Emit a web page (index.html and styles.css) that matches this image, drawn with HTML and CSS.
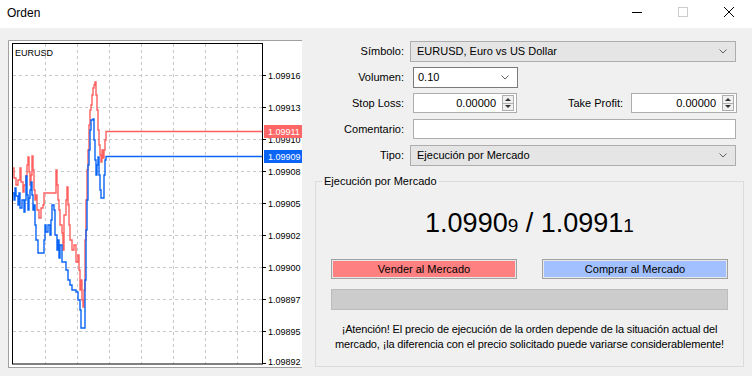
FILE: index.html
```html
<!DOCTYPE html>
<html lang="es">
<head>
    <meta charset="UTF-8">
    <title>Orden</title>
    <link rel="stylesheet" href="styles.css">
</head>
<body>
<div class="window">
    <header class="titlebar">
        <span class="title">Orden</span>
        <div class="caption-buttons">
            <span class="cap-btn">
                <svg width="12" height="12" viewBox="0 0 12 12"><path d="M1 6.5h10" stroke="#000" stroke-width="1"/></svg>
            </span>
            <span class="cap-btn">
                <svg width="12" height="12" viewBox="0 0 12 12"><rect x="1.5" y="1.5" width="9" height="9" fill="none" stroke="#cccccc"/></svg>
            </span>
            <span class="cap-btn">
                <svg width="12" height="12" viewBox="0 0 12 12"><path d="M1 1l10 10M11 1L1 11" stroke="#000" stroke-width="1"/></svg>
            </span>
        </div>
    </header>

    <main class="content">
        <section class="chart">
            <svg width="294" height="328" viewBox="8 40 294 328">
                <rect x="9" y="41" width="293" height="326" fill="#fff"/>
                <path d="M8.5 368V40.5H302M8.5 367.5H302" fill="none" stroke="#a0a0a0"/>

                <g class="grid" stroke="#c8c8c8" stroke-dasharray="3 3">
                    <path d="M45.5 44V364M77.5 44V364M109.5 44V364M141.5 44V364M173.5 44V364M205.5 44V364M237.5 44V364"/>
                    <path d="M13 75.5H262M13 107.5H262M13 139.5H262M13 171.5H262M13 203.5H262M13 235.5H262M13 267.5H262M13 299.5H262M13 331.5H262"/>
                </g>

                <polyline fill="none" stroke="#ff5f5f" stroke-width="1.4" points="13,168 14,168 14,178 16,178 16,185 18,185 18,180 20,180 20,168 21,168 21,182 23,182 23,192 24,192 24,185 26,185 26,176 27,176 27,165 28,165 28,157 29,157 29,172 30,172 30,185 31,185 31,175 32,175 32,156 33,156 33,170 34,170 34,190 35,190 35,200 36,200 36,195 37,195 37,210 39,210 39,218 41,218 41,208 43,208 43,205 44,205 44,193 55,193 56,193 56,170 57,170 57,185 58,185 58,200 59,200 59,210 60,210 60,225 62,225 62,233 63,233 63,250 64,250 64,215 66,215 66,200 67,200 67,187 68,187 68,205 69,205 69,225 70,225 70,240 72,240 72,250 74,250 74,245 76,245 76,262 78,262 78,255 79,255 79,270 80,270 80,290 81,290 81,280 82,280 82,300 83,300 83,307 84,307 84,290 85,290 85,240 86,240 86,200 87,200 87,170 88,170 88,150 89,150 89,125 90,125 90,110 91,110 91,105 92,105 92,95 93,95 93,88 94,88 94,85 95,85 95,82 96,82 96,95 97,95 97,110 98,110 98,130 99,130 99,145 100,145 100,155 101,155 101,162 102,162 102,150 103,150 103,158 104,158 104,150 105,150 105,140 106,140 106,131.5 262,131.5"/>
                <polyline fill="none" stroke="#0a64f5" stroke-width="1.4" points="13,193 14,193 14,200 15,200 15,188 16,188 16,196 18,196 18,205 19,205 19,193 20,193 20,208 22,208 22,200 24,200 24,212 25,212 25,200 26,200 26,176 27,176 27,195 28,195 28,210 29,210 29,198 30,198 30,190 31,190 31,182 32,182 32,195 33,195 33,210 34,210 34,205 35,205 35,225 36,225 36,240 38,240 38,253 43,253 44,253 44,240 45,240 45,225 46,225 46,232 48,232 48,225 50,225 50,235 51,235 51,220 52,220 52,205 54,205 54,210 55,210 55,235 57,235 57,250 58,250 58,240 59,240 59,258 60,258 60,245 62,245 62,262 64,262 66,262 66,270 68,270 68,280 70,280 70,285 72,285 72,290 76,290 76,292 78,292 78,300 80,300 80,310 81,310 81,328 84,328 85,328 85,280 86,280 86,230 87,230 87,200 88,200 88,165 89,165 89,150 90,150 90,130 91,130 91,120 93,120 93,119 94,119 94,140 95,140 95,160 96,160 96,175 97,175 97,165 98,165 98,157 99,157 99,175 100,175 100,190 101,190 101,198 103,198 104,198 104,175 105,175 105,160 106,160 106,156.5 262,156.5"/>

                <rect x="12.5" y="43.5" width="250" height="320.5" fill="none" stroke="#000"/>
                <path d="M263 75.5h3M263 107.5h3M263 139.5h3M263 171.5h3M263 203.5h3M263 235.5h3M263 267.5h3M263 299.5h3M263 331.5h3M263 363.5h3" stroke="#000"/>

                <text class="sym" x="15" y="56">EURUSD</text>
                <g class="axis">
                    <text x="268" y="79">1.09916</text>
                    <text x="268" y="111">1.09913</text>
                    <text x="268" y="143">1.09910</text>
                    <text x="268" y="175">1.09908</text>
                    <text x="268" y="207">1.09905</text>
                    <text x="268" y="239">1.09902</text>
                    <text x="268" y="271">1.09900</text>
                    <text x="268" y="303">1.09897</text>
                    <text x="268" y="335">1.09895</text>
                    <text x="268" y="365">1.09892</text>
                </g>
                <rect x="264" y="125" width="38" height="13" fill="#ff6666"/>
                <text class="tag" x="268" y="135">1.09911</text>
                <rect x="264" y="150" width="38" height="13" fill="#0a64f5"/>
                <text class="tag" x="268" y="160">1.09909</text>
            </svg>
        </section>

        <section class="order">
            <div class="form">
                <div class="row">
                    <label class="lbl">Símbolo:</label>
                    <div class="combo combo-list wide">
                        <span>EURUSD, Euro vs US Dollar</span>
                        <svg class="chev" width="8" height="5" viewBox="0 0 8 5"><path d="M0.5 0.5l3.5 3.5 3.5-3.5" fill="none" stroke="#606060"/></svg>
                    </div>
                </div>
                <div class="row">
                    <label class="lbl">Volumen:</label>
                    <div class="combo combo-edit volume">
                        <span>0.10</span>
                        <svg class="chev" width="8" height="5" viewBox="0 0 8 5"><path d="M0.5 0.5l3.5 3.5 3.5-3.5" fill="none" stroke="#606060"/></svg>
                    </div>
                </div>
                <div class="row">
                    <label class="lbl">Stop Loss:</label>
                    <div class="spin sl">
                        <span class="val">0.00000</span>
                        <span class="spin-btns"><i class="up"></i><i class="down"></i></span>
                    </div>
                    <label class="lbl tp-lbl">Take Profit:</label>
                    <div class="spin tp">
                        <span class="val">0.00000</span>
                        <span class="spin-btns"><i class="up"></i><i class="down"></i></span>
                    </div>
                </div>
                <div class="row">
                    <label class="lbl">Comentario:</label>
                    <div class="edit comment"></div>
                </div>
                <div class="row">
                    <label class="lbl">Tipo:</label>
                    <div class="combo combo-list wide">
                        <span>Ejecución por Mercado</span>
                        <svg class="chev" width="8" height="5" viewBox="0 0 8 5"><path d="M0.5 0.5l3.5 3.5 3.5-3.5" fill="none" stroke="#606060"/></svg>
                    </div>
                </div>
            </div>

            <fieldset class="exec">
                <legend>Ejecución por Mercado</legend>
                <div class="price">1.0990<small>9</small> / 1.0991<small>1</small></div>
                <div class="actions">
                    <button class="btn sell">Vender al Mercado</button>
                    <button class="btn buy">Comprar al Mercado</button>
                </div>
                <div class="progress"></div>
                <p class="warning">¡Atención! El precio de ejecución de la orden depende de la situación actual del<br>mercado, ¡la diferencia con el precio solicitado puede variarse considerablemente!</p>
            </fieldset>
        </section>
    </main>
</div>
</body>
</html>
```

FILE: styles.css
```css
body {
    margin: 0;
    font-family: "Liberation Sans", Arial, sans-serif;
    font-size: 11px;
    color: #000;
    background: #f0f0f0;
}

.window {
    width: 752px;
    height: 376px;
    overflow: hidden;
    background: #f0f0f0;
}

.titlebar {
    height: 28px;
    background: #fff;
    display: flex;
    justify-content: space-between;
    align-items: center;
}

.title {
    padding-left: 7px;
    font-size: 12px;
    margin-top: -2px;
}

.caption-buttons {
    display: flex;
    height: 28px;
}

.cap-btn {
    width: 46px;
    display: flex;
    align-items: center;
    justify-content: center;
    margin-top: -4px;
}

.content {
    display: flex;
    height: 348px;
    padding: 10px 8px 0 8px;
    box-sizing: border-box;
}

.chart {
    width: 294px;
    height: 328px;
    margin-top: 2px;
    flex: none;
}

.chart svg {
    display: block;
}

.chart text {
    font-family: "Liberation Sans", Arial, sans-serif;
    font-size: 9px;
    fill: #000;
}

.chart .tag {
    fill: #fff;
}

.order {
    flex: 1;
    margin-left: 13px;
    display: flex;
    flex-direction: column;
    padding-bottom: 9px;
}

.row {
    display: flex;
    align-items: center;
    height: 26px;
}

.lbl {
    width: 89px;
    margin-right: 6px;
    text-align: right;
    flex: none;
}

.combo {
    box-sizing: border-box;
    height: 21px;
    display: flex;
    align-items: center;
    justify-content: space-between;
    padding: 0 8px 0 6px;
}

.combo-list {
    background: #e5e5e5;
    border: 1px solid #adadad;
}

.wide {
    width: 326px;
}

.combo-edit {
    background: #fff;
    border: 1px solid #7a7a7a;
    margin-left: 3px;
    padding-left: 4px;
}

.volume {
    width: 105px;
}

.spin,
.edit {
    box-sizing: border-box;
    height: 20px;
    background: #fff;
    border: 1px solid #adadad;
    margin-left: 3px;
}

.spin {
    display: flex;
    align-items: center;
    justify-content: flex-end;
    padding-right: 2px;
}

.spin .val {
    margin-right: 6px;
}

.sl {
    width: 104px;
}

.tp-lbl {
    flex: 1;
    width: auto;
    margin-right: 5px;
}

.tp {
    width: 106px;
    margin-right: 7px;
}

.spin-btns {
    width: 12px;
    height: 16px;
    display: flex;
    flex-direction: column;
    border: 1px solid #adadad;
    box-sizing: border-box;
    background: #f0f0f0;
}

.spin-btns i {
    flex: 1;
    position: relative;
}

.spin-btns i + i {
    border-top: 1px solid #adadad;
}

.spin-btns .up::after,
.spin-btns .down::after {
    content: "";
    position: absolute;
    left: 2px;
    top: 2px;
    border-left: 3px solid transparent;
    border-right: 3px solid transparent;
}

.spin-btns .up::after {
    border-bottom: 3px solid #333;
}

.spin-btns .down::after {
    top: 1px;
    border-top: 3px solid #333;
}

.comment {
    width: 323px;
}

.exec {
    flex: 1;
    margin: 7px 0 0 0;
    padding: 0 15px;
    border: 1px solid #dcdcdc;
    min-width: 0;
}

.exec legend {
    padding: 0 2px;
    margin-left: -9px;
    font-size: 11px;
    line-height: 13px;
}

.price {
    margin-top: 20px;
    text-align: center;
    font-size: 27px;
    line-height: 30px;
}

.price small {
    font-size: 19px;
}

.actions {
    display: grid;
    grid-template-columns: 1fr 1fr;
    column-gap: 25px;
    margin-top: 18px;
}

.btn {
    height: 20px;
    font-family: inherit;
    font-size: 11px;
    color: #000;
    border: 1px solid #a0a0a0;
    box-shadow: inset 0 0 0 1px #e8e8e8;
    padding: 0;
}

.sell {
    background: #ff8080;
}

.buy {
    background: #a2c0ff;
}

.progress {
    height: 21px;
    margin-top: 10px;
    background: #cccccc;
    border: 1px solid #bcbcbc;
    box-sizing: border-box;
}

.warning {
    margin: 12px -14px 0 -14px;
    text-align: center;
    line-height: 15px;
    white-space: nowrap;
    letter-spacing: -0.15px;
}
```
